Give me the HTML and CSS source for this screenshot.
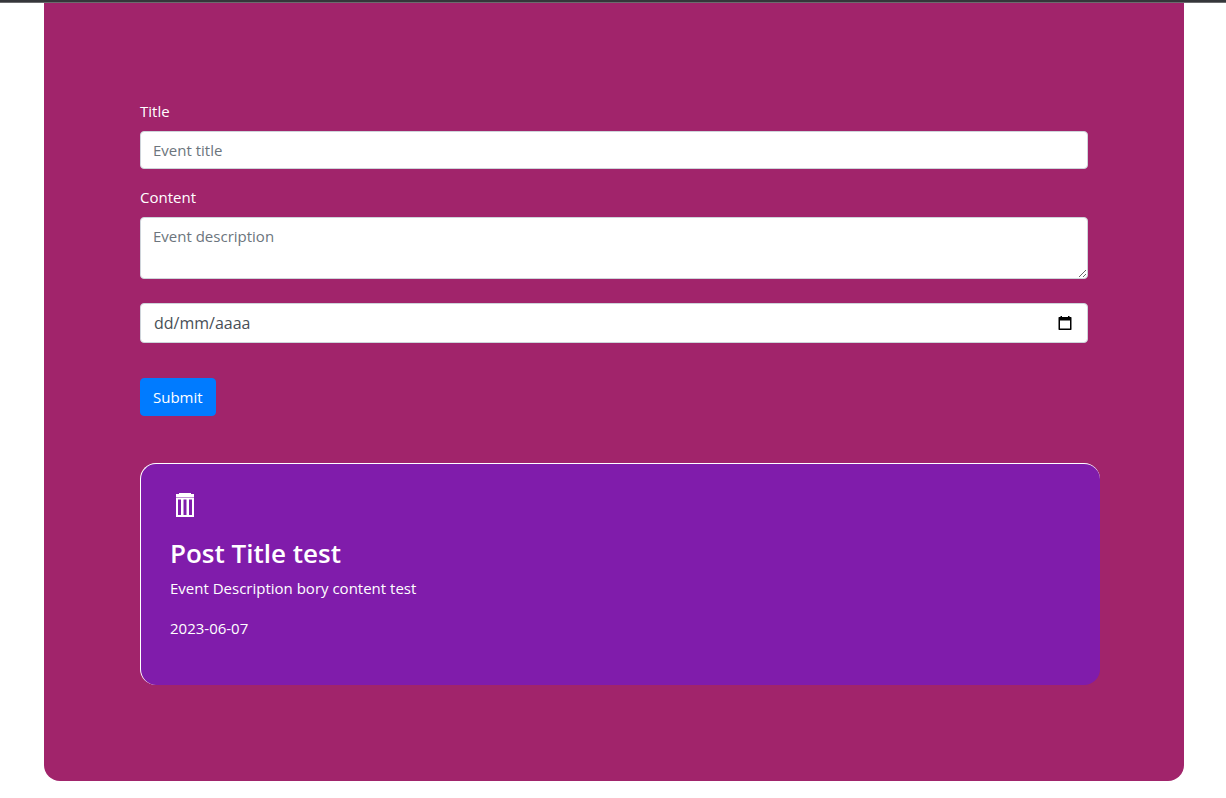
FILE: index.html
```html
<!DOCTYPE html>
<html lang="en">
<head>
  <meta charset="utf-8">
  <meta name="viewport" content="width=device-width, initial-scale=1">
  <title>Events</title>
  <link rel="stylesheet" href="styles.css">
</head>
<body>
  <header class="topbar"></header>
  <main class="page">
    <section class="panel">
      <form class="event-form">
        <div class="field">
          <label class="label" for="title">Title</label>
          <input class="control" id="title" type="text" placeholder="Event title">
        </div>
        <div class="field">
          <label class="label" for="content">Content</label>
          <textarea class="control control-area" id="content" rows="2" placeholder="Event description"></textarea>
        </div>
        <div class="control date-field">
          <input class="date-input" type="text" inputmode="numeric" aria-label="Event date" placeholder="dd/mm/aaaa">
          <button class="icon-button" type="button" aria-label="Open calendar">
            <svg width="14" height="14" viewBox="0 0 14 14" aria-hidden="true">
              <path fill="#000" fill-rule="evenodd" d="M2.500 0h1.500v1h6V0h1.500v1H13l.5.5v12l-.5.5H1l-.5-.5v-12L1 1h1.500zM2 4.500V12.500h10V4.500z"/>
            </svg>
          </button>
        </div>
        <button class="submit" type="submit">Submit</button>
      </form>
      <article class="card">
        <button class="icon-button delete" type="button" aria-label="Delete event">
          <svg width="18" height="24" viewBox="0 0 18 24" aria-hidden="true">
            <path fill="#fff" d="M3 0h12v1h3v3H0V1h3z"/>
            <path fill="#fff" opacity=".5" d="M0 4h18v1H0z"/>
            <path fill="#fff" fill-rule="evenodd" d="M0 5h18v19H0zM2 6.500V22h3V6.500zM7.500 6.500V22h3V6.500zM13 6.500V22h3V6.500z"/>
          </svg>
        </button>
        <h2 class="card-title">Post Title test</h2>
        <p class="card-text">Event Description bory content test</p>
        <p class="card-text">2023-06-07</p>
      </article>
    </section>
  </main>
</body>
</html>
```

FILE: styles.css
```css
*,
*::before,
*::after {
  box-sizing: border-box;
}

body {
  margin: 0;
  background: #fff;
  color: #fff;
  font-family: "Segoe UI", "Open Sans", "Noto Sans", sans-serif;
  font-size: 15px;
  line-height: 24px;
}

.topbar {
  height: 3px;
  background: #35363a;
  border-bottom: 1px solid #6b6b6e;
}

.page {
  padding: 0 42px 16px 44px;
}

.panel {
  padding: 96px;
  background: #a1246b;
  border-radius: 0 0 16px 16px;
}

.event-form {
  display: flex;
  flex-direction: column;
  margin-bottom: 47px;
}

.field {
  display: flex;
  flex-direction: column;
  gap: 8px;
  margin-bottom: 16px;
}

.label {
  line-height: 24px;
}

.control {
  display: block;
  width: 100%;
  height: 38px;
  padding: 6px 12px;
  background: #fff;
  color: #495057;
  border: 1px solid #ced4da;
  border-radius: 4px;
  font: inherit;
}

.control::placeholder {
  color: #6c757d;
  opacity: 1;
}

.control-area {
  height: 62px;
  resize: vertical;
}

.date-field {
  display: flex;
  align-items: center;
  height: 40px;
  margin-top: 8px;
  padding: 0 15px 0 13px;
  font-size: 16px;
}

.date-input {
  flex: 1;
  min-width: 0;
  padding: 0;
  background: none;
  border: 0;
  color: #495057;
  font: inherit;
}

.date-input::placeholder {
  color: #495057;
  opacity: 1;
}

.icon-button {
  display: flex;
  padding: 0;
  background: none;
  border: 0;
  cursor: pointer;
}

.submit {
  align-self: flex-start;
  margin-top: 35px;
  height: 38px;
  padding: 6px 12px;
  background: #007bff;
  color: #fff;
  border: 1px solid #007bff;
  border-radius: 4px;
  font: inherit;
  cursor: pointer;
}

.card {
  margin-right: -12px;
  padding: 29px;
  background: #801cab;
  border: 0 solid #fff;
  border-width: 1px 0 0 1px;
  border-radius: 16px;
}

.delete {
  margin: 0 0 19px 6px;
}

.card-title {
  margin: 0 0 6px;
  font-size: 26px;
  font-weight: 600;
  line-height: 34px;
}

.card-text {
  margin: 0 0 16px;
}
```
